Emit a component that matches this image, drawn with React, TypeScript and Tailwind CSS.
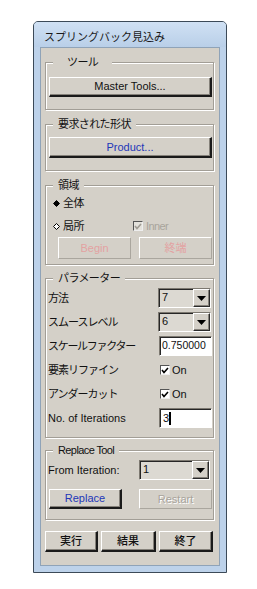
import React from "react";

const raised =
  "border border-t-white border-l-white border-r-[#2a2a2a] border-b-[#2a2a2a] shadow-[inset_-1px_-1px_0_#85817a] bg-[#d4d0c8]";
const raisedDefault =
  "border border-t-white border-l-white border-r-2 border-b-2 border-r-[#1a1a1a] border-b-[#1a1a1a] shadow-[inset_-1px_-1px_0_#85817a] bg-[#d4d0c8]";
const flat = "border border-t-white border-l-white border-r-[#aaa69e] border-b-[#aaa69e] bg-[#d4d0c8]";
const sunken =
  "border border-t-[#7c7870] border-l-[#7c7870] border-b-white border-r-white shadow-[inset_1px_1px_0_#262626]";

function Group({ label, labelPad, className, children }: { label: string; labelPad?: string; className: string; children: React.ReactNode }) {
  return (
    <div className={`relative border border-[#a29e96] shadow-[inset_1px_1px_0_#fff,1px_1px_0_#fff] ${className}`}>
      <span className={`absolute -top-[8px] left-[7px] bg-[#d4d0c8] text-[11px] leading-[14px] tracking-[-0.6px] text-[#111] ${labelPad ?? "px-[5px]"}`}>
        {label}
      </span>
      {children}
    </div>
  );
}

function Arrow() {
  return (
    <svg width="9" height="5" viewBox="0 0 9 5">
      <polygon points="0,0 9,0 4.5,5" fill="#000" />
    </svg>
  );
}

function Select({ value, w }: { value: string; w: string }) {
  return (
    <div className={`flex h-[20px] ${w} ${sunken} bg-[#dcd9d2]`}>
      <span className="flex-1 pl-[3px] text-[11px] leading-[17px] text-[#111]">{value}</span>
      <span className={`flex w-[17px] items-center justify-center ${raised}`}>
        <Arrow />
      </span>
    </div>
  );
}

function Check({ disabled }: { disabled?: boolean }) {
  return (
    <span className={`flex h-[10px] w-[10px] items-center justify-center ${disabled ? "bg-[#e4e2dc]" : "bg-white"} border border-t-[#555] border-l-[#555] border-b-[#eee] border-r-[#eee]`}>
      <svg width="8" height="7" viewBox="0 0 8 7">
        <polyline points="1,3 3,5.5 7,1" fill="none" stroke={disabled ? "#a09c94" : "#000"} strokeWidth="1.6" />
      </svg>
    </span>
  );
}

function Diamond({ filled }: { filled?: boolean }) {
  return (
    <svg width="7" height="7" viewBox="0 0 7 7">
      <polygon points="3.5,0.5 6.5,3.5 3.5,6.5 0.5,3.5" fill={filled ? "#000" : "#fff"} stroke="#000" strokeWidth="1" />
    </svg>
  );
}

export default function App() {
  return (
    <div className="min-h-[589px] bg-white pl-[33px] pt-[21px] font-['Liberation_Sans','Noto_Sans_CJK_JP',sans-serif] text-[#111]">
      <div className="w-[194px] overflow-hidden rounded-t-[5px] border border-[#3c4a58] bg-[#bdd2ea]">
        <div className="h-[25px] bg-linear-to-b from-[#d0e1f4] to-[#b9cfe8] pl-[10px] pt-[8px] text-[11px] leading-[14px] text-[#1a1a1a]">
          スプリングバック見込み
        </div>
        <div className="mx-[6px] mb-[6px] border border-[#8fa3b8] bg-[#d4d0c8] pb-[13px] pl-[4px] pr-[5px] pt-[14px]">
          <Group label="ツール" labelPad="px-[14px]" className="h-[48px] pl-[3px] pr-[1px] pt-[14px]">
            <div className={`flex h-[20px] items-center justify-center ${raisedDefault} text-[11px]`}>Master Tools...</div>
          </Group>

          <Group label="要求された形状" className="mt-[14px] h-[47px] pl-[3px] pr-[1px] pt-[12px]">
            <div className={`flex h-[21px] items-center justify-center ${raisedDefault} text-[11px] text-[#2236b8]`}>Product...</div>
          </Group>

          <Group label="領域" className="mt-[14px] h-[80px] pt-[10px]">
            <div className="flex h-[14px] items-center pl-[7px] text-[11px] tracking-[-0.6px]">
              <Diamond filled />
              <span className="ml-[3px]">全体</span>
            </div>
            <div className="mt-[9px] flex h-[14px] items-center pl-[7px] text-[11px] tracking-[-0.6px]">
              <Diamond />
              <span className="ml-[3px] w-[70px]">局所</span>
              <Check disabled />
              <span className="ml-[3px] text-[#a8a49c]">Inner</span>
            </div>
            <div className="mt-[4px] flex gap-[8px] pl-[12px]">
              <div className={`flex h-[22px] w-[73px] items-center justify-center ${flat} text-[11px] text-[#e3a2a2]`}>Begin</div>
              <div className={`flex h-[22px] w-[73px] items-center justify-center ${flat} text-[11px] text-[#e3a2a2]`}>終端</div>
            </div>
          </Group>

          <Group label="パラメーター" className="mt-[13px] h-[160px] pl-[2px] pt-[9px]">
            <div className="flex flex-col gap-[4px] text-[11px]">
              <div className="flex h-[20px] items-center">
                <span className="w-[110px] tracking-[-1px]">方法</span>
                <Select value="7" w="w-[53px]" />
              </div>
              <div className="flex h-[20px] items-center">
                <span className="w-[110px] tracking-[-1px]">スムースレベル</span>
                <Select value="6" w="w-[53px]" />
              </div>
              <div className="flex h-[20px] items-center">
                <span className="w-[111px] tracking-[-1.3px]">スケールファクター</span>
                <div className={`h-[20px] w-[53px] bg-white pl-[2px] text-[10.5px] leading-[17px] ${sunken}`}>0.750000</div>
              </div>
              <div className="flex h-[20px] items-center">
                <span className="w-[112px] tracking-[-1px]">要素リファイン</span>
                <Check />
                <span className="ml-[2px]">On</span>
              </div>
              <div className="flex h-[20px] items-center">
                <span className="w-[112px] tracking-[-1px]">アンダーカット</span>
                <Check />
                <span className="ml-[2px]">On</span>
              </div>
              <div className="flex h-[20px] items-center">
                <span className="w-[111px]">No. of Iterations</span>
                <div className={`flex h-[20px] w-[53px] items-center bg-white pl-[3px] ${sunken}`}>
                  <span>3</span>
                  <span className="h-[13px] w-[2px] bg-black" />
                </div>
              </div>
            </div>
          </Group>

          <Group label="Replace Tool" className="mt-[12px] h-[70px] pl-[2px] pt-[9px]">
            <div className="flex h-[20px] items-center text-[11px]">
              <span className="w-[91px]">From Iteration:</span>
              <Select value="1" w="w-[71px]" />
            </div>
            <div className="mt-[9px] flex gap-[17px] pl-[1px]">
              <div className={`flex h-[20px] w-[73px] items-center justify-center ${raisedDefault} text-[11px] text-[#2236b8]`}>Replace</div>
              <div className={`flex h-[20px] w-[73px] items-center justify-center ${flat} text-[11px] text-[#a8a49c] [text-shadow:1px_1px_0_#fff]`}>Restart</div>
            </div>
          </Group>

          <div className="mt-[11px] flex gap-[3px] text-[11px] font-medium">
            <div className={`flex h-[21px] w-[53px] items-center justify-center ${raisedDefault}`}>実行</div>
            <div className={`flex h-[21px] w-[55px] items-center justify-center ${raisedDefault}`}>結果</div>
            <div className={`flex h-[21px] w-[54px] items-center justify-center ${raisedDefault}`}>終了</div>
          </div>
        </div>
      </div>
    </div>
  );
}
